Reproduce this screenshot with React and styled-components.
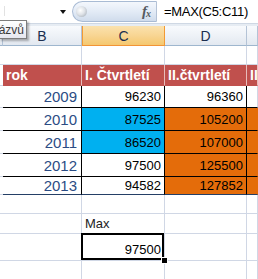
import React from 'react';
import styled, { createGlobalStyle } from 'styled-components';

const Global = createGlobalStyle`
  html, body { margin: 0; padding: 0; background: #fff; overflow: hidden; }
  #root { width: 258px; height: 279px; overflow: hidden; }
`;

const COLS = '3px 79px 83px 82px 11px';
const GRID = '#d0d7e5';
const NAVY = '#243f66';
const RED = '#c0504d';
const BLUE = '#00b0f0';
const ORANGE = '#e46c0a';

const Screen = styled.div`
  position: relative;
  width: 258px;
  height: 279px;
  overflow: hidden;
  font-family: "Liberation Sans", Arial, sans-serif;
`;

const FormulaBar = styled.div`
  display: flex;
  height: 23px;
  background: #fff;
`;

const NameBox = styled.div`
  position: relative;
  width: 72px;
  display: flex;
  align-items: center;
  justify-content: flex-end;
  padding-right: 6px;
  box-sizing: border-box;
`;

const Caret = styled.div`
  position: absolute;
  left: 4px;
  top: 6px;
  width: 1px;
  height: 10px;
  background: #e2e2e2;
`;

const DropArrow = styled.div`
  width: 0;
  height: 0;
  border-left: 3px solid transparent;
  border-right: 3px solid transparent;
  border-top: 4px solid #111;
`;

const FxPill = styled.div`
  width: 85px;
  margin: 1px 0 0 0;
  height: 21px;
  box-sizing: border-box;
  border: 1px solid #a9bbd4;
  border-right: 1px solid #b4c2d6;
  border-radius: 11px 0 0 11px;
  background: linear-gradient(#f4f7fc 0%, #e3ebf6 50%, #d0dcec 100%);
  display: flex;
  align-items: center;
  justify-content: space-between;
  padding: 0 6px 0 3px;
`;

const Knob = styled.div`
  width: 11px;
  height: 11px;
  border-radius: 50%;
  background: radial-gradient(circle at 40% 40%, #ffffff 0%, #dfe3e8 45%, #9aa3ae 100%);
`;

const Fx = styled.span`
  font-family: "Liberation Serif", "Times New Roman", serif;
  font-style: italic;
  font-weight: bold;
  font-size: 15px;
  color: #555a60;
  letter-spacing: -1px;
  sub { font-size: 10px; vertical-align: -1px; }
`;

const Formula = styled.div`
  flex: 1;
  display: flex;
  align-items: center;
  padding-left: 7px;
  font-size: 13px;
  letter-spacing: -0.3px;
  color: #000;
`;

const Band = styled.div`
  height: 3px;
  box-sizing: border-box;
  border-top: 1px solid #cfd8e4;
  background: #e6ecf3;
`;

const Row = styled.div`
  display: grid;
  grid-template-columns: ${COLS};
  height: ${p => p.$h}px;
`;

const ColHead = styled.div`
  box-sizing: border-box;
  display: flex;
  align-items: center;
  justify-content: center;
  font-size: 14px;
  color: #1b2e4f;
  border-right: 1px solid ${p => (p.$sel ? '#f29a34' : '#b4c3d6')};
  border-bottom: 1px solid ${p => (p.$sel ? '#f29436' : '#9eb6ce')};
  border-left: ${p => (p.$sel ? '1px solid #f29a34' : '0')};
  background: ${p =>
    p.$sel
      ? 'linear-gradient(#fbe2ae 0%, #f8d593 50%, #f5c86f 100%)'
      : 'linear-gradient(#f8fafd 0%, #eef2f7 50%, #e2e8f0 100%)'};
`;

const Cell = styled.div`
  position: relative;
  box-sizing: border-box;
  display: flex;
  align-items: ${p => p.$v || 'center'};
  justify-content: ${p => (p.$right ? 'flex-end' : 'flex-start')};
  padding: 0 3px ${p => p.$pb || 0}px;
  border-right: 1px solid ${p => p.$br || GRID};
  border-bottom: 1px solid ${p => p.$bb || GRID};
  background: ${p => p.$bg || '#fff'};
  white-space: nowrap;
  overflow: ${p => (p.$visible ? 'visible' : 'hidden')};
  z-index: ${p => (p.$visible ? 1 : 'auto')};
  font-size: 13px;
  color: #000;
`;

const HeadCell = styled(Cell)`
  background: ${RED};
  color: #fff;
  font-weight: bold;
  font-size: 14px;
  border-right-color: #e7bcbb;
  border-bottom-color: ${RED};
`;

const YearCell = styled(Cell)`
  font-size: 15px;
  color: #2b4c84;
  padding-right: 4px;
`;

const Label = styled(Cell)`
  color: #222;
  font-size: 13px;
`;

const Selection = styled.div`
  position: absolute;
  top: -1px;
  left: -1px;
  right: 0;
  bottom: 0;
  border: 2px solid #000;
  pointer-events: none;
`;

const FillHandle = styled.div`
  position: absolute;
  right: -3px;
  bottom: -3px;
  width: 5px;
  height: 5px;
  background: #000;
  box-shadow: 0 0 0 1px #fff;
`;

const Tooltip = styled.div`
  position: absolute;
  left: -1px;
  top: 20px;
  width: 28px;
  height: 19px;
  box-sizing: border-box;
  border: 1px solid #7d7d7d;
  background: linear-gradient(#ffffff, #e6e7ef);
  box-shadow: 2px 2px 2px rgba(0, 0, 0, 0.3);
  font-size: 12px;
  color: #3a3a3a;
  display: flex;
  align-items: center;
  justify-content: flex-end;
  padding-right: 2px;
  z-index: 2;
`;

const data = [
  { year: 2009, c: 96230, d: 96360, cBg: null, dBg: null, eBg: null, h: 22 },
  { year: 2010, c: 87525, d: 105200, cBg: BLUE, dBg: ORANGE, eBg: ORANGE, h: 23 },
  { year: 2011, c: 86520, d: 107000, cBg: BLUE, dBg: ORANGE, eBg: ORANGE, h: 23 },
  { year: 2012, c: 97500, d: 125500, cBg: null, dBg: ORANGE, eBg: ORANGE, h: 23 },
  { year: 2013, c: 94582, d: 127852, cBg: null, dBg: ORANGE, eBg: ORANGE, h: 18 },
];

export default function App() {
  return (
    <Screen>
      <Global />
      <FormulaBar>
        <NameBox>
          <Caret />
          <DropArrow />
        </NameBox>
        <FxPill>
          <Knob />
          <Fx>f<sub>x</sub></Fx>
        </FxPill>
        <Formula>=MAX(C5:C11)</Formula>
      </FormulaBar>
      <Band />
      <Row $h={20}>
        <ColHead />
        <ColHead>B</ColHead>
        <ColHead $sel>C</ColHead>
        <ColHead>D</ColHead>
        <ColHead />
      </Row>
      <Row $h={19}>
        <Cell /><Cell /><Cell /><Cell /><Cell />
      </Row>
      <Row $h={21}>
        <Cell $br={NAVY} />
        <HeadCell>rok</HeadCell>
        <HeadCell>I. Čtvrtletí</HeadCell>
        <HeadCell>II.čtvrtletí</HeadCell>
        <HeadCell>II</HeadCell>
      </Row>
      {data.map((r, i) => {
        const last = i === data.length - 1;
        const bb = last ? NAVY : '#000';
        return (
          <Row key={r.year} $h={r.h}>
            <Cell $br={NAVY} />
            <YearCell $right $br="#000" $bb={bb}>{r.year}</YearCell>
            <Cell $right $br="#000" $bb={bb} $bg={r.cBg}>{r.c}</Cell>
            <Cell $right $br="#000" $bb={bb} $bg={r.dBg}>{r.d}</Cell>
            <Cell $bb={bb} $bg={r.eBg} $br={r.eBg ? r.eBg : GRID} />
          </Row>
        );
      })}
      <Row $h={19}>
        <Cell /><Cell /><Cell /><Cell /><Cell />
      </Row>
      <Row $h={20}>
        <Cell /><Cell /><Label>Max</Label><Cell /><Cell />
      </Row>
      <Row $h={27}>
        <Cell /><Cell />
        <Cell $right $v="flex-end" $pb={3} $visible>
          97500
          <Selection />
          <FillHandle />
        </Cell>
        <Cell /><Cell />
      </Row>
      <Row $h={20}>
        <Cell /><Cell /><Cell /><Cell /><Cell />
      </Row>
      <Tooltip>ázvů</Tooltip>
    </Screen>
  );
}
